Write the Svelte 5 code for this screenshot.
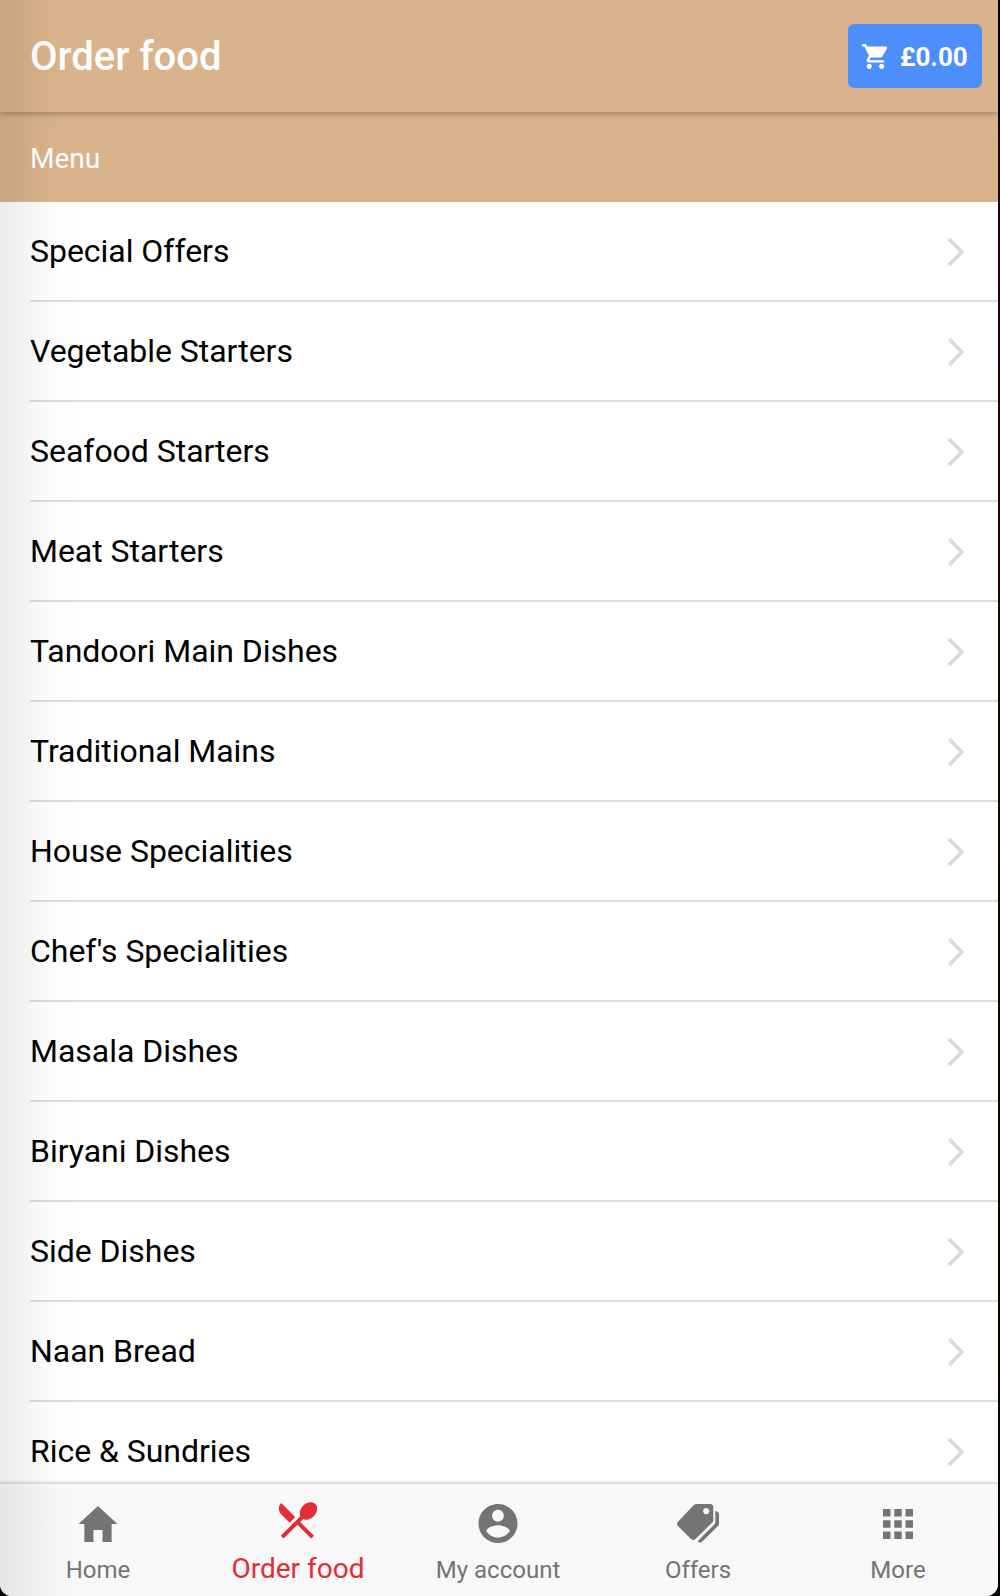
<script>
  const categories = [
    'Special Offers', 'Vegetable Starters', 'Seafood Starters', 'Meat Starters',
    'Tandoori Main Dishes', 'Traditional Mains', 'House Specialities',
    "Chef's Specialities", 'Masala Dishes', 'Biryani Dishes', 'Side Dishes',
    'Naan Bread', 'Rice & Sundries'
  ];
  const cells = [9, 20.25, 31.5];
</script>

<div class="window">
  <div class="app">
    <header class="toolbar">
      <h1>Order food</h1>
      <button class="cart">
        <svg width="31" height="31" viewBox="0 0 512 512" fill="currentColor">
          <path d="M169.6 377.6c-22.882 0-41.6 18.718-41.6 41.601 0 22.882 18.718 41.6 41.6 41.6s41.601-18.718 41.601-41.6c-.001-22.884-18.72-41.601-41.601-41.601zM48 51.2v41.6h41.6l74.883 151.682-31.308 50.954c-3.118 5.2-5.2 12.482-5.2 19.765 0 27.85 19.025 41.6 44.825 41.6H416v-40H177.893c-3.118 0-5.2-2.082-5.2-5.2 0-1.036 2.207-5.2 2.207-5.2l20.782-32.8h154.954c15.601 0 29.128-8.317 36.4-21.836l74.882-128.8c1.237-2.461 2.082-6.246 2.082-10.4 0-11.446-9.364-19.765-20.8-19.765H135.364L115.6 51.2H48zm326.399 326.4c-22.882 0-41.6 18.718-41.6 41.601 0 22.882 18.718 41.6 41.6 41.6S416 442.082 416 419.2c0-22.883-18.719-41.6-41.601-41.6z" />
        </svg>
        <span>£0.00</span>
      </button>
    </header>

    <main class="content">
      <div class="divider">Menu</div>
      {#each categories as name}
        <div class="row">
          <span>{name}</span>
          <svg class="chevron" width="18" height="30" viewBox="0 0 18 30">
            <path d="M2 2l12.800 13L2 28" />
          </svg>
        </div>
      {/each}
    </main>

    <nav class="tabs">
      <div class="tab">
        <svg width="48" height="48" viewBox="0 0 512 512" fill="currentColor">
          <path d="M208 448V320h96v128h97.6V256H464L256 64 48 256h62.4v192z" />
        </svg>
        <span>Home</span>
      </div>
      <div class="tab active">
        <svg width="48" height="48" viewBox=".3 0 24 24" fill="currentColor">
          <path d="M8.1 13.34l2.83-2.83L3.91 3.5c-1.56 1.56-1.56 4.09 0 5.66l4.19 4.18zm6.78-1.81c1.53.71 3.68.21 5.27-1.38 1.91-1.91 2.28-4.65.81-6.12-1.46-1.46-4.2-1.1-6.12.81-1.59 1.59-2.09 3.74-1.38 5.27L3.7 19.87l1.41 1.41L12 14.41l6.88 6.88 1.41-1.41L13.41 13l1.47-1.47z" />
        </svg>
        <span>Order food</span>
      </div>
      <div class="tab">
        <svg width="48" height="48" viewBox="-.3 -.05 24.6 24.6" fill="currentColor">
          <path d="M12 2C6.48 2 2 6.48 2 12s4.48 10 10 10 10-4.48 10-10S17.52 2 12 2zm0 3c1.66 0 3 1.34 3 3s-1.34 3-3 3-3-1.34-3-3 1.34-3 3-3zm0 14.2c-2.5 0-4.71-1.28-6-3.22.03-1.99 4-3.08 6-3.08 1.99 0 5.97 1.09 6 3.08-1.29 1.94-3.5 3.22-6 3.22z" />
        </svg>
        <span>My account</span>
      </div>
      <div class="tab">
        <svg width="48" height="48" viewBox="0 0 48 48" fill="currentColor">
          <path fill-rule="evenodd" d="M22.5 4H36q3.300 0 3.300 3.300V20q0 1.400-1 2.400L21.500 38.900q-2.300 2.200-4.600 0L4 26q-2-2.100 0-4.300L19.600 5.200Q20.800 4 22.500 4zM32.200 8a3.100 3.100 0 1 0 .01 0z" />
          <path d="M41.300 10.700l2.300 1.200q1.400.8 1.400 2.300v9.600q0 1.300-1 2.300L28.300 41.600q-2.300 2.200-4.700-.3L40.300 24.600q1-1 1-2.300z" />
        </svg>
        <span>Offers</span>
      </div>
      <div class="tab">
        <svg width="48" height="48" viewBox="0 0 48 48" fill="currentColor">
          {#each cells as y}
            {#each cells as x}
              <rect {x} {y} width="7.5" height="7.5" />
            {/each}
          {/each}
        </svg>
        <span>More</span>
      </div>
    </nav>
    <div class="edge-shade"></div>
  </div>
</div>

<style>
  :global(body) {
    margin: 0;
    background: #080304;
  }
  .window {
    height: 1596px;
    padding-right: 2px;
    box-sizing: border-box;
    overflow: hidden;
    background: linear-gradient(#000 0 110px, #1d0305 130px, #210507 260px, #0d0304 1500px, #000);
    font-family: Roboto, sans-serif;
  }
  .app {
    position: relative;
    display: flex;
    flex-direction: column;
    height: 1596px;
    overflow: hidden;
    background: #fff;
    border-radius: 0 0 12px 12px;
  }
  .toolbar {
    position: relative;
    z-index: 1;
    flex: none;
    display: flex;
    align-items: center;
    justify-content: space-between;
    height: 112px;
    padding: 0 16px 0 30px;
    box-sizing: border-box;
    background: #d9b38b;
    box-shadow: 0 2px 3px rgba(0, 0, 0, 0.13), 0 3px 7px rgba(0, 0, 0, 0.12);
  }
  h1 {
    margin: 0;
    color: #fff;
    font-size: 40px;
    font-weight: 500;
  }
  .cart {
    display: flex;
    align-items: center;
    gap: 10px;
    width: 134px;
    height: 64px;
    padding: 0 0 0 11px;
    border: 0;
    border-radius: 6px;
    background: #4d8efd;
    color: #fff;
    font: 700 26px Roboto, sans-serif;
  }
  .cart svg {
    flex: none;
    margin-top: 1px;
  }
  .cart span {
    padding-top: 1px;
  }
  .content {
    flex: 1;
    min-height: 0;
    overflow: hidden;
  }
  .divider {
    display: flex;
    align-items: center;
    height: 90px;
    padding: 2px 0 0 30px;
    box-sizing: border-box;
    background: #d9b38b;
    color: #fff;
    font-size: 28px;
  }
  .row {
    display: flex;
    align-items: center;
    justify-content: space-between;
    height: 100px;
    margin-left: 30px;
    padding-right: 33px;
    box-sizing: border-box;
    border-bottom: 2px solid #dcdcdc;
    color: #000;
    font-size: 32px;
    letter-spacing: -0.03px;
  }
  .chevron {
    margin-top: 2px;
    fill: none;
    stroke: #dcdcdc;
    stroke-width: 3.8;
  }
  .tabs {
    position: relative;
    flex: none;
    display: flex;
    height: 114px;
    margin-left: -2px;
    box-sizing: border-box;
    border-top: 2px solid #e2e2e2;
    background: #f8f8f8;
    box-shadow: 0 -1px 2px rgba(0, 0, 0, 0.06);
  }
  .tab {
    flex: 1;
    display: flex;
    flex-direction: column;
    align-items: center;
    padding-top: 16px;
    color: #747474;
    font-size: 24px;
    line-height: 28px;
  }
  .tab span {
    margin-top: 8px;
  }
  .tab.active {
    padding-top: 12px;
    color: #e12d33;
    font-size: 28px;
    line-height: 32px;
  }
  .tab.active span {
    margin-top: 9px;
  }
  .edge-shade {
    position: absolute;
    z-index: 2;
    inset: 0 auto 0 0;
    width: 80px;
    background: linear-gradient(to right, rgba(0, 0, 0, 0.08), rgba(0, 0, 0, 0.045) 35%, rgba(0, 0, 0, 0.012) 65%, transparent);
    pointer-events: none;
  }
</style>
